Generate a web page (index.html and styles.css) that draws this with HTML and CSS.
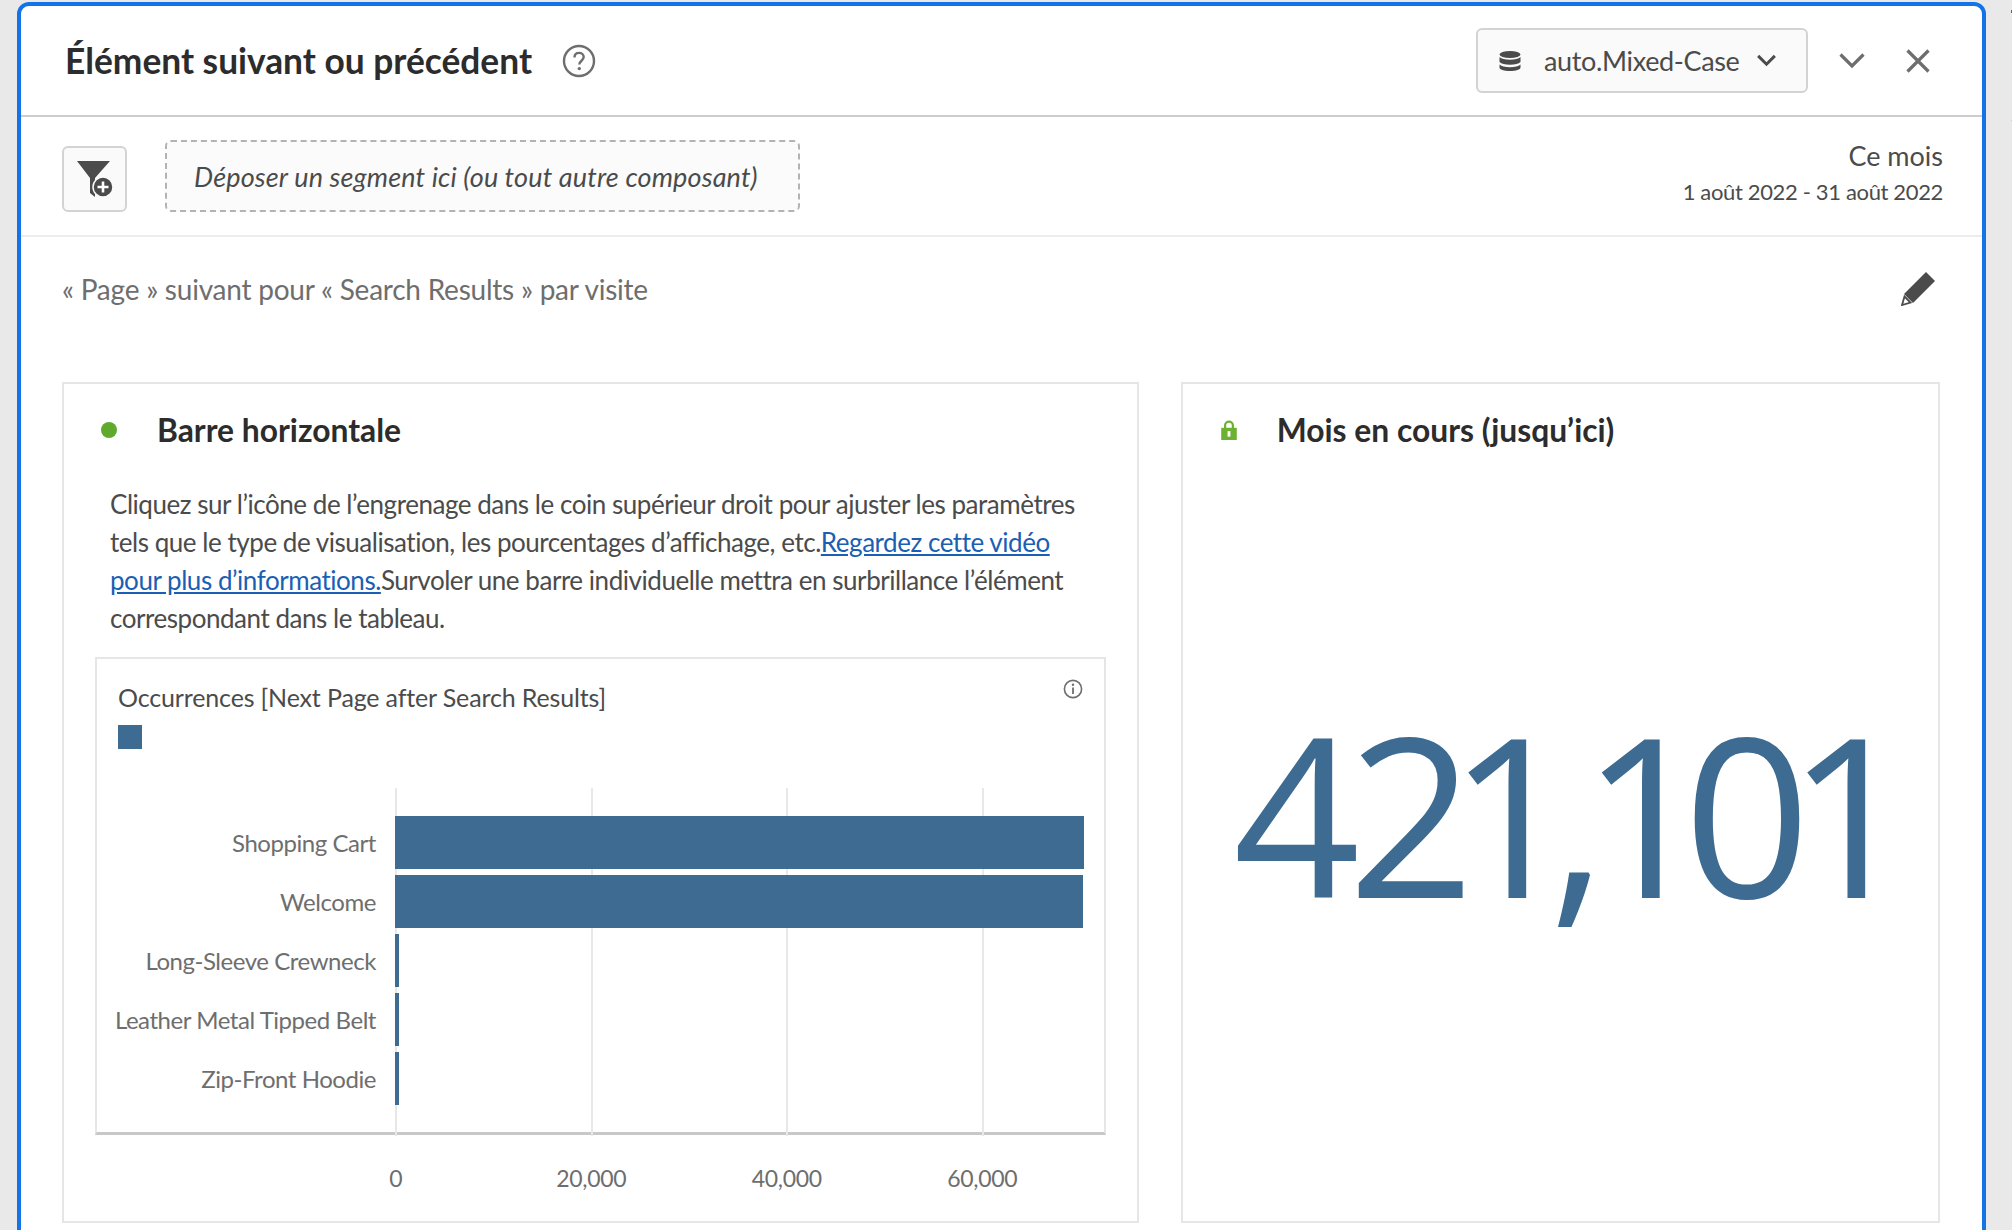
FILE: index.html
```html
<!DOCTYPE html>
<html lang="fr">
<head>
    <meta charset="UTF-8">
    <meta name="viewport" content="width=device-width, initial-scale=1.0">
    <title>Élément suivant ou précédent</title>
    <link rel="stylesheet" href="styles.css">
</head>
<body>
    <div class="panel">
        <div class="panel-header">
            <h1 class="panel-title">Élément suivant ou précédent</h1>
            <svg class="help-icon" viewBox="0 0 34 34"><circle cx="17" cy="17" r="15" fill="none" stroke="#6e6e6e" stroke-width="2.4"/><path d="M12.5 13.5c0-3 2-4.6 4.6-4.6s4.6 1.7 4.6 4.2c0 3.6-4.4 3.7-4.4 7.4" fill="none" stroke="#6e6e6e" stroke-width="2.4"/><circle cx="17.3" cy="24.6" r="1.7" fill="#6e6e6e"/></svg>
            <div class="header-actions">
                <div class="source-select">
                    <svg class="db-icon" viewBox="0 0 22 20"><ellipse cx="11" cy="3.5" rx="10.500" ry="3.500" fill="#4b4b4b"/><path d="M.5 6c2 2 5.500 2.700 10.500 2.700S19.500 8 21.500 6v5c-2 2-5.500 2.700-10.500 2.700S2.500 13 .5 11z" fill="#4b4b4b"/><path d="M.5 13.500c2 2 5.500 2.700 10.500 2.700s8.500-.7 10.500-2.700V16.500c0 2-4.500 3.500-10.500 3.500S.5 18.500.5 16.500z" fill="#4b4b4b"/></svg>
                    <span class="source-name">auto.Mixed-Case</span>
                    <svg class="select-chevron" viewBox="0 0 22 14"><path d="M2 2l9 9 9-9" fill="none" stroke="#4b4b4b" stroke-width="3.200"/></svg>
                </div>
                <svg class="collapse-icon" viewBox="0 0 26 16"><path d="M1.500 1.500L13 13 24.500 1.500" fill="none" stroke="#6e6e6e" stroke-width="3.200"/></svg>
                <svg class="close-icon" viewBox="0 0 24 24"><path d="M1.500 1.500l21 21M22.500 1.500l-21 21" fill="none" stroke="#6e6e6e" stroke-width="3.200"/></svg>
            </div>
        </div>

        <div class="filter-row">
            <div class="filter-btn">
                <svg class="filter-icon" viewBox="0 0 36 38"><path d="M0 1h33L18 18v19l-5-4V18z" fill="#4b4b4b"/><circle cx="26" cy="27" r="10" fill="#4b4b4b" stroke="#fafafa" stroke-width="1.500"/><path d="M26 21.500v11M20.500 27h11" stroke="#fff" stroke-width="2.600"/></svg>
            </div>
            <div class="drop-zone">Déposer un segment ici (ou tout autre composant)</div>
            <div class="date-range">
                <div class="date-name">Ce mois</div>
                <div class="date-values">1 août 2022 - 31 août 2022</div>
            </div>
        </div>

        <div class="panel-body">
            <div class="summary-row">
                <p class="summary">« Page » suivant pour « Search Results » par visite</p>
                <svg class="edit-icon" viewBox="0 0 34 34"><path d="M25 0l9 9-22 22-9-9z" fill="#4b4b4b"/><path d="M3.500 24.500l6 6-8.500 2.500z" fill="#fff" stroke="#4b4b4b" stroke-width="1.800"/></svg>
            </div>

            <div class="cards">
                <div class="card card-bars">
                    <div class="card-title">
                        <span class="status-dot"></span>
                        <h2>Barre horizontale</h2>
                    </div>
                    <p class="card-text">Cliquez sur l’icône de l’engrenage dans le coin supérieur droit pour ajuster les paramètres<br>tels que le type de visualisation, les pourcentages d’affichage, etc.<a href="#">Regardez cette vidéo <br>pour plus d’informations.</a>Survoler une barre individuelle mettra en surbrillance l’élément<br>correspondant dans le tableau.</p>

                    <div class="chart">
                        <div class="chart-frame">
                            <div class="chart-head">
                                <span class="chart-title">Occurrences [Next Page after Search Results]</span>
                                <svg class="info-icon" viewBox="0 0 20 20"><circle cx="10" cy="10" r="8.600" fill="none" stroke="#6e6e6e" stroke-width="1.600"/><circle cx="10" cy="5.800" r="1.200" fill="#6e6e6e"/><path d="M10 8.500v6.500" stroke="#6e6e6e" stroke-width="1.800"/></svg>
                            </div>
                            <div class="legend-swatch"></div>
                            <div class="plot">
                                <div class="grid-lines">
                                    <span></span><span></span><span></span><span></span>
                                </div>
                                <div class="bar-row"><span class="bar-label">Shopping Cart</span><span class="bar" style="width: 689px"></span></div>
                                <div class="bar-row"><span class="bar-label">Welcome</span><span class="bar" style="width: 688px"></span></div>
                                <div class="bar-row"><span class="bar-label">Long-Sleeve Crewneck</span><span class="bar" style="width: 4px"></span></div>
                                <div class="bar-row"><span class="bar-label">Leather Metal Tipped Belt</span><span class="bar" style="width: 4px"></span></div>
                                <div class="bar-row"><span class="bar-label">Zip-Front Hoodie</span><span class="bar" style="width: 4px"></span></div>
                            </div>
                        </div>
                        <div class="axis">
                            <span>0</span><span>20,000</span><span>40,000</span><span>60,000</span>
                        </div>
                    </div>
                </div>

                <div class="card card-total">
                    <div class="card-title">
                        <svg class="lock-icon" viewBox="0 0 14 18"><path d="M3.500 8V5a3.500 3.500 0 0 1 7 0v3" fill="none" stroke="#6cb12f" stroke-width="2"/><path d="M0 7h14v11H0z" fill="#6cb12f"/><rect x="5.700" y="10" width="2.600" height="5" fill="#fff"/></svg>
                        <h2>Mois en cours (jusqu’ici)</h2>
                    </div>
                    <div class="big-number">421,101</div>
                </div>
            </div>
        </div>
    </div>
    <div class="next-panel"></div>
</body>
</html>
```

FILE: styles.css
```css
html, body {
    margin: 0;
    height: 1230px;
    overflow: hidden;
}

body {
    display: flex;
    align-items: flex-start;
    background-color: #e9e9e9;
    font-family: "Lato", "Liberation Sans", sans-serif;
    color: #4b4b4b;
}

.panel {
    box-sizing: border-box;
    flex: none;
    width: 1969px;
    height: 1300px;
    margin: 2px 0 0 17px;
    background-color: #fff;
    border: 4px solid #1473e6;
    border-radius: 12px;
}

/* edge of the next panel, just visible at the right of the window */
.next-panel {
    flex: none;
    width: 1px;
    height: 107px;
    margin: 10px 0 0 25px;
    border-top: 3px solid #1473e6;
    border-bottom: 1px solid #cdcdcd;
}

.panel-header {
    display: flex;
    align-items: center;
    height: 109px;
    padding: 0 52px 0 44px;
    border-bottom: 2px solid #cdcdcd;
}

.panel-title {
    margin: 0;
    font-size: 35.300px;
    font-weight: 700;
    color: #2c2c2c;
}

.help-icon {
    width: 34px;
    height: 34px;
    margin-left: 30px;
}

.header-actions {
    display: flex;
    align-items: center;
    margin-left: auto;
}

.source-select {
    box-sizing: border-box;
    display: flex;
    align-items: center;
    width: 332px;
    height: 65px;
    padding-left: 21px;
    background-color: #fafafa;
    border: 2px solid #d3d3d3;
    border-radius: 6px;
}

.db-icon {
    width: 22px;
    height: 20px;
}

.source-name {
    margin-left: 23px;
    font-size: 27px;
    letter-spacing: -0.350px;
}

.select-chevron {
    width: 21px;
    height: 13px;
    margin-left: 16px;
}

.collapse-icon {
    width: 26px;
    height: 16px;
    margin-left: 31px;
}

.close-icon {
    width: 24px;
    height: 24px;
    margin-left: 41px;
}

.filter-row {
    display: flex;
    align-items: center;
    height: 118px;
    padding: 0 39px 0 41px;
    border-bottom: 2px solid #ececec;
}

.filter-btn {
    box-sizing: border-box;
    display: flex;
    align-items: center;
    justify-content: center;
    width: 65px;
    height: 66px;
    margin-top: 6px;
    background-color: #fafafa;
    border: 2px solid #d3d3d3;
    border-radius: 6px;
}

.filter-icon {
    width: 36px;
    height: 38px;
}

.drop-zone {
    box-sizing: border-box;
    display: flex;
    align-items: center;
    width: 635px;
    height: 72px;
    margin-left: 38px;
    padding-left: 27px;
    background-color: #fbfbfb;
    border: 2px dashed #b3b3b3;
    border-radius: 6px;
    font-size: 27px;
    font-style: italic;
    letter-spacing: 0.150px;
}

.date-range {
    margin-top: -7px;
    margin-left: auto;
    text-align: right;
}

.date-name {
    font-size: 27px;
    line-height: 36px;
}

.date-values {
    margin-top: 3px;
    font-size: 22px;
    line-height: 30px;
    letter-spacing: -0.350px;
}

.panel-body {
    padding: 0 42px 0 41px;
}

.summary-row {
    display: flex;
    align-items: center;
    justify-content: space-between;
    height: 103px;
    padding-bottom: 42px;
}

.summary {
    margin: 0;
    font-size: 28px;
    letter-spacing: -0.230px;
    color: #6e6e6e;
}

.edit-icon {
    width: 34px;
    height: 34px;
    margin-right: 5px;
}

.cards {
    display: flex;
    gap: 42px;
}

.card {
    box-sizing: border-box;
    height: 841px;
    background-color: #fff;
    border: 2px solid #e6e6e6;
}

.card-bars {
    width: 1079px;
}

.card-total {
    width: 761px;
}

.card-title {
    display: flex;
    align-items: center;
    height: 44px;
    margin-top: 24px;
}

.card-title h2 {
    margin: 0;
    font-size: 31.800px;
    font-weight: 700;
    color: #2c2c2c;
}

.status-dot {
    width: 16px;
    height: 16px;
    margin: 0 40px 0 37px;
    background-color: #5fa92d;
    border-radius: 50%;
}

.lock-icon {
    width: 16px;
    height: 20px;
    margin: 0 40px 0 38px;
}

.card-text {
    margin: 33px 0 0 46px;
    font-size: 26px;
    line-height: 38px;
    letter-spacing: -0.460px;
    color: #4b4b4b;
}

.card-text a {
    color: #1a5fb4;
}

.chart {
    width: 1011px;
    margin: 20px 0 0 31px;
}

.chart-frame {
    box-sizing: border-box;
    height: 478px;
    padding-top: 19px;
    border: 2px solid #e6e6e6;
    border-bottom-color: #c8c8c8;
    border-bottom-width: 3px;
}

.chart-head {
    display: flex;
    justify-content: space-between;
    height: 38px;
    padding: 0 21px 0 21px;
}

.chart-title {
    font-size: 25px;
    line-height: 38px;
    letter-spacing: -0.150px;
}

.info-icon {
    width: 20px;
    height: 20px;
    margin-top: 1px;
}

.legend-swatch {
    width: 24px;
    height: 24px;
    margin: 9px 0 0 21px;
    background-color: #3e6b91;
}

.plot {
    position: relative;
    height: 348px;
    margin-top: 39px;
    padding-top: 28px;
    box-sizing: border-box;
}

.grid-lines {
    position: absolute;
    top: 0;
    bottom: 0;
    left: 298px;
    display: flex;
}

.grid-lines span {
    width: 195.500px;
    box-sizing: border-box;
    border-left: 2px solid #e8e8e8;
}

.bar-row {
    position: relative;
    display: flex;
    align-items: center;
    height: 53px;
    margin-bottom: 6px;
}

.bar-label {
    box-sizing: border-box;
    width: 298px;
    padding-right: 19px;
    font-size: 24px;
    letter-spacing: -0.450px;
    color: #6e6e6e;
    text-align: right;
}

.bar {
    height: 100%;
    background-color: #3e6b91;
}

.axis {
    display: flex;
    margin: 26px 0 0 203px;
}

.axis span {
    width: 195.500px;
    font-size: 23px;
    line-height: 34px;
    letter-spacing: -0.300px;
    color: #6e6e6e;
    text-align: center;
}

.big-number {
    margin: 210px 0 0 50px;
    font-family: "Open Sans", "Liberation Sans", sans-serif;
    font-size: 222px;
    font-weight: 500;
    font-variant-numeric: proportional-nums;
    line-height: 300px;
    letter-spacing: -10px;
    color: #3e6b91;
    white-space: nowrap;
}
```
